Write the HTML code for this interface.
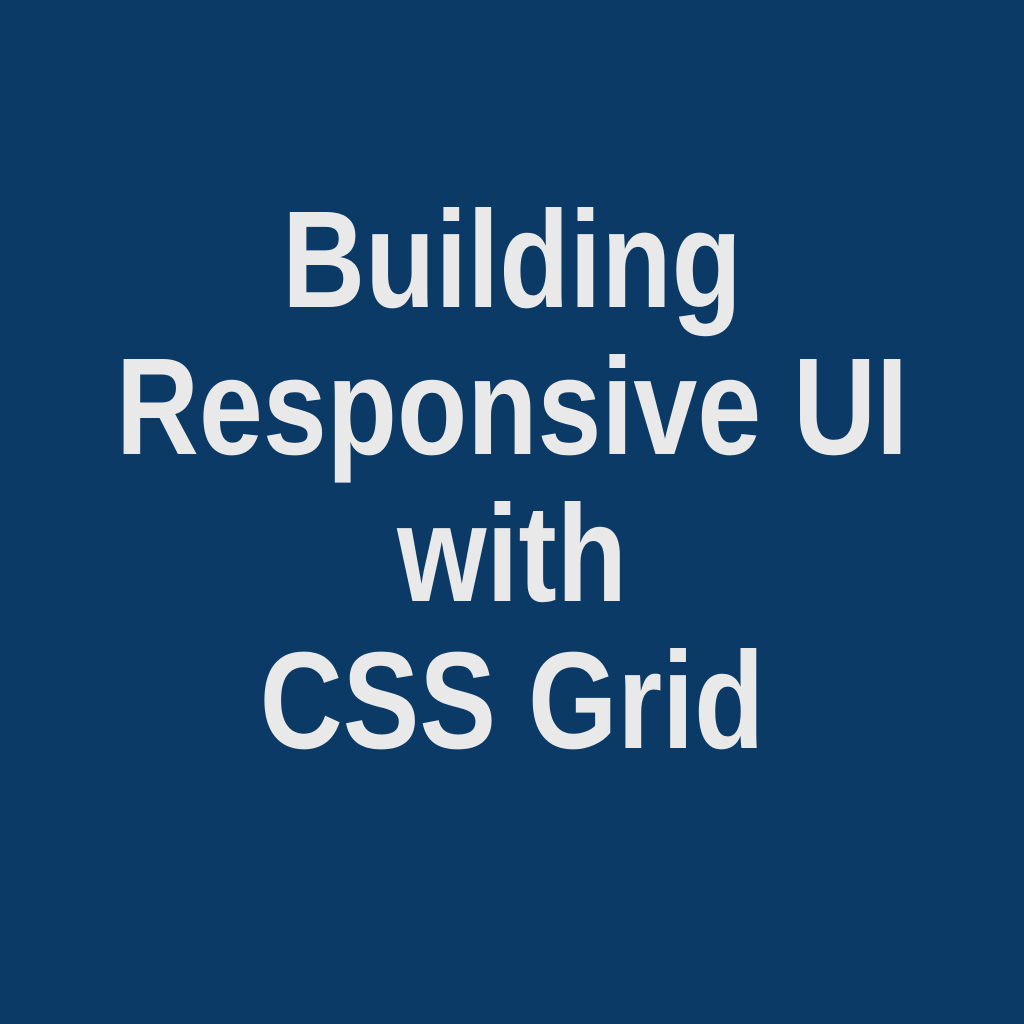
<!DOCTYPE html>
<html><head><meta charset="utf-8"><style>
html,body{margin:0;padding:0;width:1024px;height:1024px;background:#0b3a66;overflow:hidden}
.t{position:absolute;left:0;top:187px;width:1024px;text-align:center;font-family:"Liberation Sans",sans-serif;font-weight:bold;font-size:138px;line-height:147px;color:#e9e9e9}
.t div{transform:scaleX(0.833);transform-origin:center;white-space:nowrap}
</style></head><body>
<div class="t"><div>Building</div><div>Responsive UI</div><div>with</div><div>CSS Grid</div></div>
</body></html>
